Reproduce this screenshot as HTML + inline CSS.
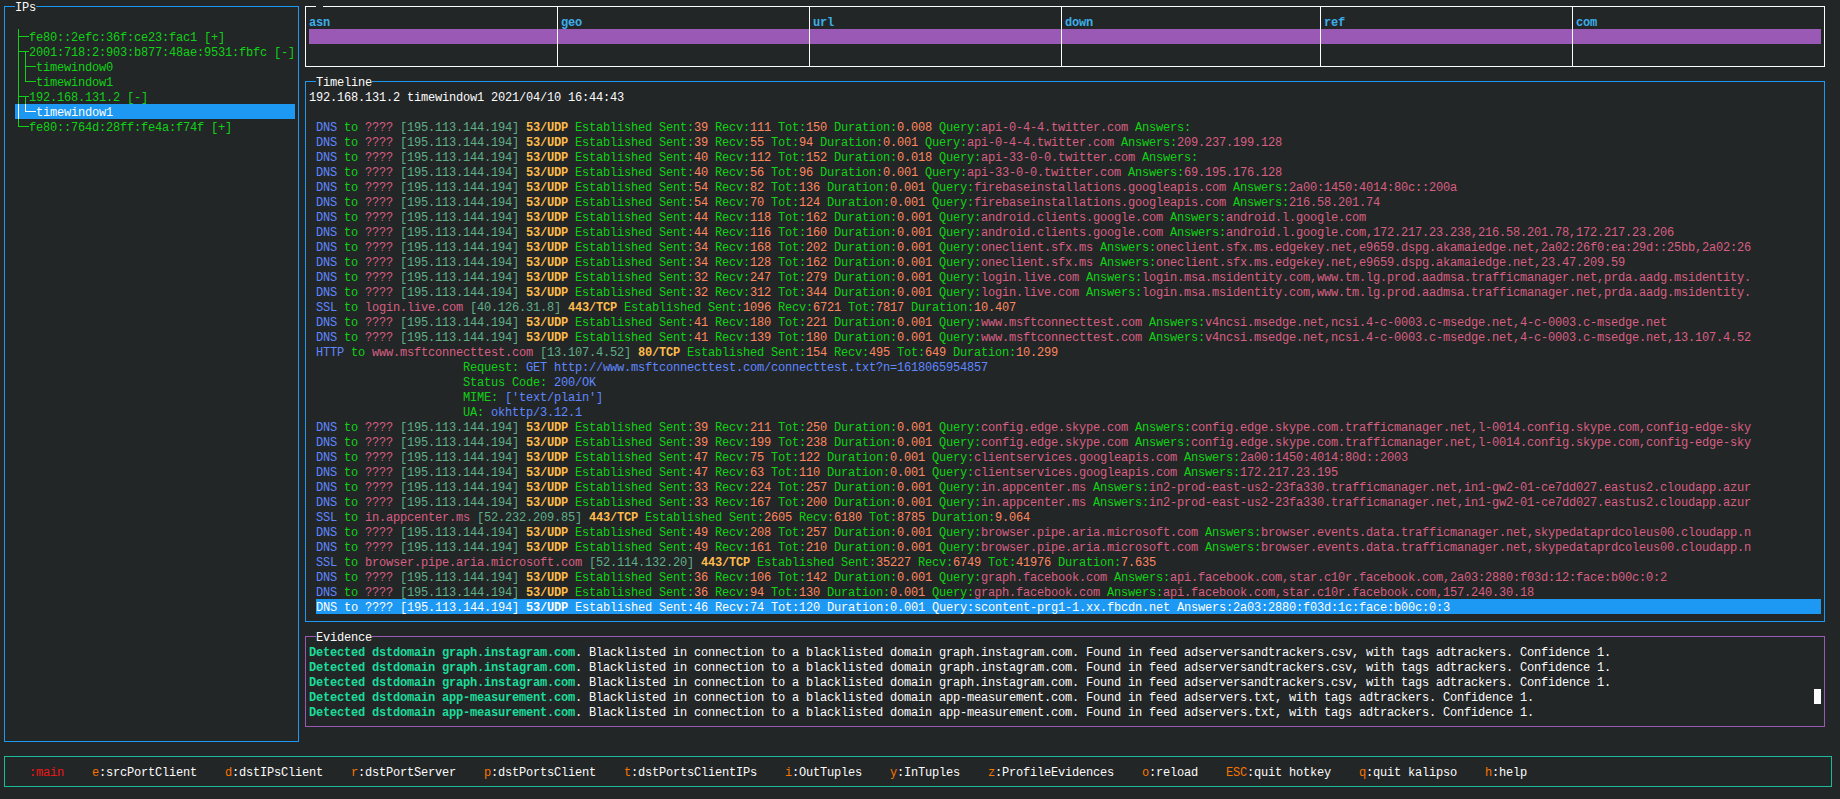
<!DOCTYPE html>
<html><head><meta charset="utf-8"><title>kalipso</title>
<style>
html,body{margin:0;padding:0;background:#232627;}
body{width:1840px;height:799px;overflow:hidden;position:relative;font-family:"Liberation Mono",monospace;font-size:12.0000px;letter-spacing:-0.2012px;color:#fcfcfc;}
i,b,s{position:absolute;display:block;font-style:normal;text-decoration:none;}
s{white-space:pre;height:15px;line-height:15px;font-weight:normal;}
s.B{font-weight:bold;}
.c0{color:#fcfcfc;}
.c1{color:#11d116;}
.c2{color:#3daee9;}
.c3{color:#5f87ff;}
.c4{color:#d75f82;}
.c5{color:#5faf87;}
.c6{color:#fdbc4b;}
.c7{color:#ff875f;}
.c8{color:#1cdc9a;}
.c9{color:#ed1515;}
.c10{color:#f67400;}
</style></head><body>
<b style="left:15px;top:104px;width:280px;height:15px;background:#1d99f3"></b>
<b style="left:309px;top:29px;width:1512px;height:15px;background:#9b59b6"></b>
<b style="left:316px;top:599px;width:1505px;height:15px;background:#1d99f3"></b>
<b style="left:1814px;top:689px;width:7px;height:15px;background:#fcfcfc"></b>
<i style="left:4px;top:6px;width:11px;height:1px;background:#1d99f3"></i>
<i style="left:36px;top:6px;width:263px;height:1px;background:#1d99f3"></i>
<i style="left:4px;top:741px;width:295px;height:1px;background:#1d99f3"></i>
<i style="left:4px;top:6px;width:1px;height:736px;background:#1d99f3"></i>
<i style="left:298px;top:6px;width:1px;height:736px;background:#1d99f3"></i>
<i style="left:18px;top:29px;width:1px;height:75px;background:#11d116"></i>
<i style="left:18px;top:104px;width:1px;height:15px;background:#fcfcfc"></i>
<i style="left:18px;top:119px;width:1px;height:8px;background:#11d116"></i>
<i style="left:18px;top:36px;width:11px;height:1px;background:#11d116"></i>
<i style="left:18px;top:51px;width:11px;height:1px;background:#11d116"></i>
<i style="left:25px;top:51px;width:1px;height:31px;background:#11d116"></i>
<i style="left:25px;top:66px;width:11px;height:1px;background:#11d116"></i>
<i style="left:25px;top:81px;width:11px;height:1px;background:#11d116"></i>
<i style="left:18px;top:96px;width:11px;height:1px;background:#11d116"></i>
<i style="left:25px;top:96px;width:1px;height:8px;background:#11d116"></i>
<i style="left:25px;top:104px;width:1px;height:8px;background:#fcfcfc"></i>
<i style="left:25px;top:111px;width:11px;height:1px;background:#fcfcfc"></i>
<i style="left:18px;top:126px;width:11px;height:1px;background:#11d116"></i>
<i style="left:305px;top:6px;width:11px;height:1px;background:#fcfcfc"></i>
<i style="left:323px;top:6px;width:1502px;height:1px;background:#fcfcfc"></i>
<i style="left:305px;top:66px;width:1520px;height:1px;background:#fcfcfc"></i>
<i style="left:305px;top:6px;width:1px;height:61px;background:#fcfcfc"></i>
<i style="left:1824px;top:6px;width:1px;height:61px;background:#fcfcfc"></i>
<i style="left:557px;top:6px;width:1px;height:60px;background:#fcfcfc"></i>
<i style="left:809px;top:6px;width:1px;height:60px;background:#fcfcfc"></i>
<i style="left:1061px;top:6px;width:1px;height:60px;background:#fcfcfc"></i>
<i style="left:1320px;top:6px;width:1px;height:60px;background:#fcfcfc"></i>
<i style="left:1572px;top:6px;width:1px;height:60px;background:#fcfcfc"></i>
<i style="left:305px;top:81px;width:11px;height:1px;background:#1d99f3"></i>
<i style="left:372px;top:81px;width:1453px;height:1px;background:#1d99f3"></i>
<i style="left:305px;top:621px;width:1520px;height:1px;background:#1d99f3"></i>
<i style="left:305px;top:81px;width:1px;height:541px;background:#1d99f3"></i>
<i style="left:1824px;top:81px;width:1px;height:541px;background:#1d99f3"></i>
<i style="left:305px;top:636px;width:11px;height:1px;background:#9b59b6"></i>
<i style="left:372px;top:636px;width:1453px;height:1px;background:#9b59b6"></i>
<i style="left:305px;top:726px;width:1520px;height:1px;background:#9b59b6"></i>
<i style="left:305px;top:636px;width:1px;height:91px;background:#9b59b6"></i>
<i style="left:1824px;top:636px;width:1px;height:91px;background:#9b59b6"></i>
<i style="left:4px;top:756px;width:1828px;height:1px;background:#1abc9c"></i>
<i style="left:4px;top:786px;width:1828px;height:1px;background:#1abc9c"></i>
<i style="left:4px;top:756px;width:1px;height:31px;background:#1abc9c"></i>
<i style="left:1831px;top:756px;width:1px;height:31px;background:#1abc9c"></i>
<s class="c0" style="left:15px;top:1.0px">IPs</s>
<s class="c1" style="left:29px;top:31.0px">fe80::2efc:36f:ce23:fac1 [+]</s>
<s class="c1" style="left:29px;top:46.0px">2001:718:2:903:b877:48ae:9531:fbfc [-]</s>
<s class="c1" style="left:36px;top:61.0px">timewindow0</s>
<s class="c1" style="left:36px;top:76.0px">timewindow1</s>
<s class="c1" style="left:29px;top:91.0px">192.168.131.2 [-]</s>
<s class="c0" style="left:36px;top:106.0px">timewindow1</s>
<s class="c1" style="left:29px;top:121.0px">fe80::764d:28ff:fe4a:f74f [+]</s>
<s class="c2 B" style="left:309px;top:16.0px">asn</s>
<s class="c2 B" style="left:561px;top:16.0px">geo</s>
<s class="c2 B" style="left:813px;top:16.0px">url</s>
<s class="c2 B" style="left:1065px;top:16.0px">down</s>
<s class="c2 B" style="left:1324px;top:16.0px">ref</s>
<s class="c2 B" style="left:1576px;top:16.0px">com</s>
<s class="c0" style="left:316px;top:76.0px">Timeline</s>
<s class="c0" style="left:309px;top:91.0px">192.168.131.2 timewindow1 2021/04/10 16:44:43</s>
<s class="c3" style="left:316px;top:121.0px">DNS</s>
<s class="c1" style="left:344px;top:121.0px">to</s>
<s class="c4" style="left:365px;top:121.0px">????</s>
<s class="c5" style="left:400px;top:121.0px">[195.113.144.194]</s>
<s class="c6 B" style="left:526px;top:121.0px">53/UDP</s>
<s class="c1" style="left:575px;top:121.0px">Established</s>
<s class="c1" style="left:659px;top:121.0px">Sent:</s>
<s class="c7" style="left:694px;top:121.0px">39</s>
<s class="c1" style="left:715px;top:121.0px">Recv:</s>
<s class="c7" style="left:750px;top:121.0px">111</s>
<s class="c1" style="left:778px;top:121.0px">Tot:</s>
<s class="c7" style="left:806px;top:121.0px">150</s>
<s class="c1" style="left:834px;top:121.0px">Duration:</s>
<s class="c7" style="left:897px;top:121.0px">0.008</s>
<s class="c1" style="left:939px;top:121.0px">Query:</s>
<s class="c4" style="left:981px;top:121.0px">api-0-4-4.twitter.com</s>
<s class="c1" style="left:1135px;top:121.0px">Answers:</s>
<s class="c3" style="left:316px;top:136.0px">DNS</s>
<s class="c1" style="left:344px;top:136.0px">to</s>
<s class="c4" style="left:365px;top:136.0px">????</s>
<s class="c5" style="left:400px;top:136.0px">[195.113.144.194]</s>
<s class="c6 B" style="left:526px;top:136.0px">53/UDP</s>
<s class="c1" style="left:575px;top:136.0px">Established</s>
<s class="c1" style="left:659px;top:136.0px">Sent:</s>
<s class="c7" style="left:694px;top:136.0px">39</s>
<s class="c1" style="left:715px;top:136.0px">Recv:</s>
<s class="c7" style="left:750px;top:136.0px">55</s>
<s class="c1" style="left:771px;top:136.0px">Tot:</s>
<s class="c7" style="left:799px;top:136.0px">94</s>
<s class="c1" style="left:820px;top:136.0px">Duration:</s>
<s class="c7" style="left:883px;top:136.0px">0.001</s>
<s class="c1" style="left:925px;top:136.0px">Query:</s>
<s class="c4" style="left:967px;top:136.0px">api-0-4-4.twitter.com</s>
<s class="c1" style="left:1121px;top:136.0px">Answers:</s>
<s class="c4" style="left:1177px;top:136.0px">209.237.199.128</s>
<s class="c3" style="left:316px;top:151.0px">DNS</s>
<s class="c1" style="left:344px;top:151.0px">to</s>
<s class="c4" style="left:365px;top:151.0px">????</s>
<s class="c5" style="left:400px;top:151.0px">[195.113.144.194]</s>
<s class="c6 B" style="left:526px;top:151.0px">53/UDP</s>
<s class="c1" style="left:575px;top:151.0px">Established</s>
<s class="c1" style="left:659px;top:151.0px">Sent:</s>
<s class="c7" style="left:694px;top:151.0px">40</s>
<s class="c1" style="left:715px;top:151.0px">Recv:</s>
<s class="c7" style="left:750px;top:151.0px">112</s>
<s class="c1" style="left:778px;top:151.0px">Tot:</s>
<s class="c7" style="left:806px;top:151.0px">152</s>
<s class="c1" style="left:834px;top:151.0px">Duration:</s>
<s class="c7" style="left:897px;top:151.0px">0.018</s>
<s class="c1" style="left:939px;top:151.0px">Query:</s>
<s class="c4" style="left:981px;top:151.0px">api-33-0-0.twitter.com</s>
<s class="c1" style="left:1142px;top:151.0px">Answers:</s>
<s class="c3" style="left:316px;top:166.0px">DNS</s>
<s class="c1" style="left:344px;top:166.0px">to</s>
<s class="c4" style="left:365px;top:166.0px">????</s>
<s class="c5" style="left:400px;top:166.0px">[195.113.144.194]</s>
<s class="c6 B" style="left:526px;top:166.0px">53/UDP</s>
<s class="c1" style="left:575px;top:166.0px">Established</s>
<s class="c1" style="left:659px;top:166.0px">Sent:</s>
<s class="c7" style="left:694px;top:166.0px">40</s>
<s class="c1" style="left:715px;top:166.0px">Recv:</s>
<s class="c7" style="left:750px;top:166.0px">56</s>
<s class="c1" style="left:771px;top:166.0px">Tot:</s>
<s class="c7" style="left:799px;top:166.0px">96</s>
<s class="c1" style="left:820px;top:166.0px">Duration:</s>
<s class="c7" style="left:883px;top:166.0px">0.001</s>
<s class="c1" style="left:925px;top:166.0px">Query:</s>
<s class="c4" style="left:967px;top:166.0px">api-33-0-0.twitter.com</s>
<s class="c1" style="left:1128px;top:166.0px">Answers:</s>
<s class="c4" style="left:1184px;top:166.0px">69.195.176.128</s>
<s class="c3" style="left:316px;top:181.0px">DNS</s>
<s class="c1" style="left:344px;top:181.0px">to</s>
<s class="c4" style="left:365px;top:181.0px">????</s>
<s class="c5" style="left:400px;top:181.0px">[195.113.144.194]</s>
<s class="c6 B" style="left:526px;top:181.0px">53/UDP</s>
<s class="c1" style="left:575px;top:181.0px">Established</s>
<s class="c1" style="left:659px;top:181.0px">Sent:</s>
<s class="c7" style="left:694px;top:181.0px">54</s>
<s class="c1" style="left:715px;top:181.0px">Recv:</s>
<s class="c7" style="left:750px;top:181.0px">82</s>
<s class="c1" style="left:771px;top:181.0px">Tot:</s>
<s class="c7" style="left:799px;top:181.0px">136</s>
<s class="c1" style="left:827px;top:181.0px">Duration:</s>
<s class="c7" style="left:890px;top:181.0px">0.001</s>
<s class="c1" style="left:932px;top:181.0px">Query:</s>
<s class="c4" style="left:974px;top:181.0px">firebaseinstallations.googleapis.com</s>
<s class="c1" style="left:1233px;top:181.0px">Answers:</s>
<s class="c4" style="left:1289px;top:181.0px">2a00:1450:4014:80c::200a</s>
<s class="c3" style="left:316px;top:196.0px">DNS</s>
<s class="c1" style="left:344px;top:196.0px">to</s>
<s class="c4" style="left:365px;top:196.0px">????</s>
<s class="c5" style="left:400px;top:196.0px">[195.113.144.194]</s>
<s class="c6 B" style="left:526px;top:196.0px">53/UDP</s>
<s class="c1" style="left:575px;top:196.0px">Established</s>
<s class="c1" style="left:659px;top:196.0px">Sent:</s>
<s class="c7" style="left:694px;top:196.0px">54</s>
<s class="c1" style="left:715px;top:196.0px">Recv:</s>
<s class="c7" style="left:750px;top:196.0px">70</s>
<s class="c1" style="left:771px;top:196.0px">Tot:</s>
<s class="c7" style="left:799px;top:196.0px">124</s>
<s class="c1" style="left:827px;top:196.0px">Duration:</s>
<s class="c7" style="left:890px;top:196.0px">0.001</s>
<s class="c1" style="left:932px;top:196.0px">Query:</s>
<s class="c4" style="left:974px;top:196.0px">firebaseinstallations.googleapis.com</s>
<s class="c1" style="left:1233px;top:196.0px">Answers:</s>
<s class="c4" style="left:1289px;top:196.0px">216.58.201.74</s>
<s class="c3" style="left:316px;top:211.0px">DNS</s>
<s class="c1" style="left:344px;top:211.0px">to</s>
<s class="c4" style="left:365px;top:211.0px">????</s>
<s class="c5" style="left:400px;top:211.0px">[195.113.144.194]</s>
<s class="c6 B" style="left:526px;top:211.0px">53/UDP</s>
<s class="c1" style="left:575px;top:211.0px">Established</s>
<s class="c1" style="left:659px;top:211.0px">Sent:</s>
<s class="c7" style="left:694px;top:211.0px">44</s>
<s class="c1" style="left:715px;top:211.0px">Recv:</s>
<s class="c7" style="left:750px;top:211.0px">118</s>
<s class="c1" style="left:778px;top:211.0px">Tot:</s>
<s class="c7" style="left:806px;top:211.0px">162</s>
<s class="c1" style="left:834px;top:211.0px">Duration:</s>
<s class="c7" style="left:897px;top:211.0px">0.001</s>
<s class="c1" style="left:939px;top:211.0px">Query:</s>
<s class="c4" style="left:981px;top:211.0px">android.clients.google.com</s>
<s class="c1" style="left:1170px;top:211.0px">Answers:</s>
<s class="c4" style="left:1226px;top:211.0px">android.l.google.com</s>
<s class="c3" style="left:316px;top:226.0px">DNS</s>
<s class="c1" style="left:344px;top:226.0px">to</s>
<s class="c4" style="left:365px;top:226.0px">????</s>
<s class="c5" style="left:400px;top:226.0px">[195.113.144.194]</s>
<s class="c6 B" style="left:526px;top:226.0px">53/UDP</s>
<s class="c1" style="left:575px;top:226.0px">Established</s>
<s class="c1" style="left:659px;top:226.0px">Sent:</s>
<s class="c7" style="left:694px;top:226.0px">44</s>
<s class="c1" style="left:715px;top:226.0px">Recv:</s>
<s class="c7" style="left:750px;top:226.0px">116</s>
<s class="c1" style="left:778px;top:226.0px">Tot:</s>
<s class="c7" style="left:806px;top:226.0px">160</s>
<s class="c1" style="left:834px;top:226.0px">Duration:</s>
<s class="c7" style="left:897px;top:226.0px">0.001</s>
<s class="c1" style="left:939px;top:226.0px">Query:</s>
<s class="c4" style="left:981px;top:226.0px">android.clients.google.com</s>
<s class="c1" style="left:1170px;top:226.0px">Answers:</s>
<s class="c4" style="left:1226px;top:226.0px">android.l.google.com,172.217.23.238,216.58.201.78,172.217.23.206</s>
<s class="c3" style="left:316px;top:241.0px">DNS</s>
<s class="c1" style="left:344px;top:241.0px">to</s>
<s class="c4" style="left:365px;top:241.0px">????</s>
<s class="c5" style="left:400px;top:241.0px">[195.113.144.194]</s>
<s class="c6 B" style="left:526px;top:241.0px">53/UDP</s>
<s class="c1" style="left:575px;top:241.0px">Established</s>
<s class="c1" style="left:659px;top:241.0px">Sent:</s>
<s class="c7" style="left:694px;top:241.0px">34</s>
<s class="c1" style="left:715px;top:241.0px">Recv:</s>
<s class="c7" style="left:750px;top:241.0px">168</s>
<s class="c1" style="left:778px;top:241.0px">Tot:</s>
<s class="c7" style="left:806px;top:241.0px">202</s>
<s class="c1" style="left:834px;top:241.0px">Duration:</s>
<s class="c7" style="left:897px;top:241.0px">0.001</s>
<s class="c1" style="left:939px;top:241.0px">Query:</s>
<s class="c4" style="left:981px;top:241.0px">oneclient.sfx.ms</s>
<s class="c1" style="left:1100px;top:241.0px">Answers:</s>
<s class="c4" style="left:1156px;top:241.0px">oneclient.sfx.ms.edgekey.net,e9659.dspg.akamaiedge.net,2a02:26f0:ea:29d::25bb,2a02:26</s>
<s class="c3" style="left:316px;top:256.0px">DNS</s>
<s class="c1" style="left:344px;top:256.0px">to</s>
<s class="c4" style="left:365px;top:256.0px">????</s>
<s class="c5" style="left:400px;top:256.0px">[195.113.144.194]</s>
<s class="c6 B" style="left:526px;top:256.0px">53/UDP</s>
<s class="c1" style="left:575px;top:256.0px">Established</s>
<s class="c1" style="left:659px;top:256.0px">Sent:</s>
<s class="c7" style="left:694px;top:256.0px">34</s>
<s class="c1" style="left:715px;top:256.0px">Recv:</s>
<s class="c7" style="left:750px;top:256.0px">128</s>
<s class="c1" style="left:778px;top:256.0px">Tot:</s>
<s class="c7" style="left:806px;top:256.0px">162</s>
<s class="c1" style="left:834px;top:256.0px">Duration:</s>
<s class="c7" style="left:897px;top:256.0px">0.001</s>
<s class="c1" style="left:939px;top:256.0px">Query:</s>
<s class="c4" style="left:981px;top:256.0px">oneclient.sfx.ms</s>
<s class="c1" style="left:1100px;top:256.0px">Answers:</s>
<s class="c4" style="left:1156px;top:256.0px">oneclient.sfx.ms.edgekey.net,e9659.dspg.akamaiedge.net,23.47.209.59</s>
<s class="c3" style="left:316px;top:271.0px">DNS</s>
<s class="c1" style="left:344px;top:271.0px">to</s>
<s class="c4" style="left:365px;top:271.0px">????</s>
<s class="c5" style="left:400px;top:271.0px">[195.113.144.194]</s>
<s class="c6 B" style="left:526px;top:271.0px">53/UDP</s>
<s class="c1" style="left:575px;top:271.0px">Established</s>
<s class="c1" style="left:659px;top:271.0px">Sent:</s>
<s class="c7" style="left:694px;top:271.0px">32</s>
<s class="c1" style="left:715px;top:271.0px">Recv:</s>
<s class="c7" style="left:750px;top:271.0px">247</s>
<s class="c1" style="left:778px;top:271.0px">Tot:</s>
<s class="c7" style="left:806px;top:271.0px">279</s>
<s class="c1" style="left:834px;top:271.0px">Duration:</s>
<s class="c7" style="left:897px;top:271.0px">0.001</s>
<s class="c1" style="left:939px;top:271.0px">Query:</s>
<s class="c4" style="left:981px;top:271.0px">login.live.com</s>
<s class="c1" style="left:1086px;top:271.0px">Answers:</s>
<s class="c4" style="left:1142px;top:271.0px">login.msa.msidentity.com,www.tm.lg.prod.aadmsa.trafficmanager.net,prda.aadg.msidentity.</s>
<s class="c3" style="left:316px;top:286.0px">DNS</s>
<s class="c1" style="left:344px;top:286.0px">to</s>
<s class="c4" style="left:365px;top:286.0px">????</s>
<s class="c5" style="left:400px;top:286.0px">[195.113.144.194]</s>
<s class="c6 B" style="left:526px;top:286.0px">53/UDP</s>
<s class="c1" style="left:575px;top:286.0px">Established</s>
<s class="c1" style="left:659px;top:286.0px">Sent:</s>
<s class="c7" style="left:694px;top:286.0px">32</s>
<s class="c1" style="left:715px;top:286.0px">Recv:</s>
<s class="c7" style="left:750px;top:286.0px">312</s>
<s class="c1" style="left:778px;top:286.0px">Tot:</s>
<s class="c7" style="left:806px;top:286.0px">344</s>
<s class="c1" style="left:834px;top:286.0px">Duration:</s>
<s class="c7" style="left:897px;top:286.0px">0.001</s>
<s class="c1" style="left:939px;top:286.0px">Query:</s>
<s class="c4" style="left:981px;top:286.0px">login.live.com</s>
<s class="c1" style="left:1086px;top:286.0px">Answers:</s>
<s class="c4" style="left:1142px;top:286.0px">login.msa.msidentity.com,www.tm.lg.prod.aadmsa.trafficmanager.net,prda.aadg.msidentity.</s>
<s class="c3" style="left:316px;top:301.0px">SSL</s>
<s class="c1" style="left:344px;top:301.0px">to</s>
<s class="c4" style="left:365px;top:301.0px">login.live.com</s>
<s class="c5" style="left:470px;top:301.0px">[40.126.31.8]</s>
<s class="c6 B" style="left:568px;top:301.0px">443/TCP</s>
<s class="c1" style="left:624px;top:301.0px">Established</s>
<s class="c1" style="left:708px;top:301.0px">Sent:</s>
<s class="c7" style="left:743px;top:301.0px">1096</s>
<s class="c1" style="left:778px;top:301.0px">Recv:</s>
<s class="c7" style="left:813px;top:301.0px">6721</s>
<s class="c1" style="left:848px;top:301.0px">Tot:</s>
<s class="c7" style="left:876px;top:301.0px">7817</s>
<s class="c1" style="left:911px;top:301.0px">Duration:</s>
<s class="c7" style="left:974px;top:301.0px">10.407</s>
<s class="c3" style="left:316px;top:316.0px">DNS</s>
<s class="c1" style="left:344px;top:316.0px">to</s>
<s class="c4" style="left:365px;top:316.0px">????</s>
<s class="c5" style="left:400px;top:316.0px">[195.113.144.194]</s>
<s class="c6 B" style="left:526px;top:316.0px">53/UDP</s>
<s class="c1" style="left:575px;top:316.0px">Established</s>
<s class="c1" style="left:659px;top:316.0px">Sent:</s>
<s class="c7" style="left:694px;top:316.0px">41</s>
<s class="c1" style="left:715px;top:316.0px">Recv:</s>
<s class="c7" style="left:750px;top:316.0px">180</s>
<s class="c1" style="left:778px;top:316.0px">Tot:</s>
<s class="c7" style="left:806px;top:316.0px">221</s>
<s class="c1" style="left:834px;top:316.0px">Duration:</s>
<s class="c7" style="left:897px;top:316.0px">0.001</s>
<s class="c1" style="left:939px;top:316.0px">Query:</s>
<s class="c4" style="left:981px;top:316.0px">www.msftconnecttest.com</s>
<s class="c1" style="left:1149px;top:316.0px">Answers:</s>
<s class="c4" style="left:1205px;top:316.0px">v4ncsi.msedge.net,ncsi.4-c-0003.c-msedge.net,4-c-0003.c-msedge.net</s>
<s class="c3" style="left:316px;top:331.0px">DNS</s>
<s class="c1" style="left:344px;top:331.0px">to</s>
<s class="c4" style="left:365px;top:331.0px">????</s>
<s class="c5" style="left:400px;top:331.0px">[195.113.144.194]</s>
<s class="c6 B" style="left:526px;top:331.0px">53/UDP</s>
<s class="c1" style="left:575px;top:331.0px">Established</s>
<s class="c1" style="left:659px;top:331.0px">Sent:</s>
<s class="c7" style="left:694px;top:331.0px">41</s>
<s class="c1" style="left:715px;top:331.0px">Recv:</s>
<s class="c7" style="left:750px;top:331.0px">139</s>
<s class="c1" style="left:778px;top:331.0px">Tot:</s>
<s class="c7" style="left:806px;top:331.0px">180</s>
<s class="c1" style="left:834px;top:331.0px">Duration:</s>
<s class="c7" style="left:897px;top:331.0px">0.001</s>
<s class="c1" style="left:939px;top:331.0px">Query:</s>
<s class="c4" style="left:981px;top:331.0px">www.msftconnecttest.com</s>
<s class="c1" style="left:1149px;top:331.0px">Answers:</s>
<s class="c4" style="left:1205px;top:331.0px">v4ncsi.msedge.net,ncsi.4-c-0003.c-msedge.net,4-c-0003.c-msedge.net,13.107.4.52</s>
<s class="c3" style="left:316px;top:346.0px">HTTP</s>
<s class="c1" style="left:351px;top:346.0px">to</s>
<s class="c4" style="left:372px;top:346.0px">www.msftconnecttest.com</s>
<s class="c5" style="left:540px;top:346.0px">[13.107.4.52]</s>
<s class="c6 B" style="left:638px;top:346.0px">80/TCP</s>
<s class="c1" style="left:687px;top:346.0px">Established</s>
<s class="c1" style="left:771px;top:346.0px">Sent:</s>
<s class="c7" style="left:806px;top:346.0px">154</s>
<s class="c1" style="left:834px;top:346.0px">Recv:</s>
<s class="c7" style="left:869px;top:346.0px">495</s>
<s class="c1" style="left:897px;top:346.0px">Tot:</s>
<s class="c7" style="left:925px;top:346.0px">649</s>
<s class="c1" style="left:953px;top:346.0px">Duration:</s>
<s class="c7" style="left:1016px;top:346.0px">10.299</s>
<s class="c1" style="left:463px;top:361.0px">Request: </s>
<s class="c3" style="left:526px;top:361.0px">GET http:</s>
<s class="c3" style="left:589px;top:361.0px">//www.msftconnecttest.com/connecttest.txt?n=1618065954857</s>
<s class="c1" style="left:463px;top:376.0px">Status Code: </s>
<s class="c3" style="left:554px;top:376.0px">200/OK</s>
<s class="c1" style="left:463px;top:391.0px">MIME: </s>
<s class="c3" style="left:505px;top:391.0px">[&#x27;text/plain&#x27;]</s>
<s class="c1" style="left:463px;top:406.0px">UA: </s>
<s class="c3" style="left:491px;top:406.0px">okhttp/3.12.1</s>
<s class="c3" style="left:316px;top:421.0px">DNS</s>
<s class="c1" style="left:344px;top:421.0px">to</s>
<s class="c4" style="left:365px;top:421.0px">????</s>
<s class="c5" style="left:400px;top:421.0px">[195.113.144.194]</s>
<s class="c6 B" style="left:526px;top:421.0px">53/UDP</s>
<s class="c1" style="left:575px;top:421.0px">Established</s>
<s class="c1" style="left:659px;top:421.0px">Sent:</s>
<s class="c7" style="left:694px;top:421.0px">39</s>
<s class="c1" style="left:715px;top:421.0px">Recv:</s>
<s class="c7" style="left:750px;top:421.0px">211</s>
<s class="c1" style="left:778px;top:421.0px">Tot:</s>
<s class="c7" style="left:806px;top:421.0px">250</s>
<s class="c1" style="left:834px;top:421.0px">Duration:</s>
<s class="c7" style="left:897px;top:421.0px">0.001</s>
<s class="c1" style="left:939px;top:421.0px">Query:</s>
<s class="c4" style="left:981px;top:421.0px">config.edge.skype.com</s>
<s class="c1" style="left:1135px;top:421.0px">Answers:</s>
<s class="c4" style="left:1191px;top:421.0px">config.edge.skype.com.trafficmanager.net,l-0014.config.skype.com,config-edge-sky</s>
<s class="c3" style="left:316px;top:436.0px">DNS</s>
<s class="c1" style="left:344px;top:436.0px">to</s>
<s class="c4" style="left:365px;top:436.0px">????</s>
<s class="c5" style="left:400px;top:436.0px">[195.113.144.194]</s>
<s class="c6 B" style="left:526px;top:436.0px">53/UDP</s>
<s class="c1" style="left:575px;top:436.0px">Established</s>
<s class="c1" style="left:659px;top:436.0px">Sent:</s>
<s class="c7" style="left:694px;top:436.0px">39</s>
<s class="c1" style="left:715px;top:436.0px">Recv:</s>
<s class="c7" style="left:750px;top:436.0px">199</s>
<s class="c1" style="left:778px;top:436.0px">Tot:</s>
<s class="c7" style="left:806px;top:436.0px">238</s>
<s class="c1" style="left:834px;top:436.0px">Duration:</s>
<s class="c7" style="left:897px;top:436.0px">0.001</s>
<s class="c1" style="left:939px;top:436.0px">Query:</s>
<s class="c4" style="left:981px;top:436.0px">config.edge.skype.com</s>
<s class="c1" style="left:1135px;top:436.0px">Answers:</s>
<s class="c4" style="left:1191px;top:436.0px">config.edge.skype.com.trafficmanager.net,l-0014.config.skype.com,config-edge-sky</s>
<s class="c3" style="left:316px;top:451.0px">DNS</s>
<s class="c1" style="left:344px;top:451.0px">to</s>
<s class="c4" style="left:365px;top:451.0px">????</s>
<s class="c5" style="left:400px;top:451.0px">[195.113.144.194]</s>
<s class="c6 B" style="left:526px;top:451.0px">53/UDP</s>
<s class="c1" style="left:575px;top:451.0px">Established</s>
<s class="c1" style="left:659px;top:451.0px">Sent:</s>
<s class="c7" style="left:694px;top:451.0px">47</s>
<s class="c1" style="left:715px;top:451.0px">Recv:</s>
<s class="c7" style="left:750px;top:451.0px">75</s>
<s class="c1" style="left:771px;top:451.0px">Tot:</s>
<s class="c7" style="left:799px;top:451.0px">122</s>
<s class="c1" style="left:827px;top:451.0px">Duration:</s>
<s class="c7" style="left:890px;top:451.0px">0.001</s>
<s class="c1" style="left:932px;top:451.0px">Query:</s>
<s class="c4" style="left:974px;top:451.0px">clientservices.googleapis.com</s>
<s class="c1" style="left:1184px;top:451.0px">Answers:</s>
<s class="c4" style="left:1240px;top:451.0px">2a00:1450:4014:80d::2003</s>
<s class="c3" style="left:316px;top:466.0px">DNS</s>
<s class="c1" style="left:344px;top:466.0px">to</s>
<s class="c4" style="left:365px;top:466.0px">????</s>
<s class="c5" style="left:400px;top:466.0px">[195.113.144.194]</s>
<s class="c6 B" style="left:526px;top:466.0px">53/UDP</s>
<s class="c1" style="left:575px;top:466.0px">Established</s>
<s class="c1" style="left:659px;top:466.0px">Sent:</s>
<s class="c7" style="left:694px;top:466.0px">47</s>
<s class="c1" style="left:715px;top:466.0px">Recv:</s>
<s class="c7" style="left:750px;top:466.0px">63</s>
<s class="c1" style="left:771px;top:466.0px">Tot:</s>
<s class="c7" style="left:799px;top:466.0px">110</s>
<s class="c1" style="left:827px;top:466.0px">Duration:</s>
<s class="c7" style="left:890px;top:466.0px">0.001</s>
<s class="c1" style="left:932px;top:466.0px">Query:</s>
<s class="c4" style="left:974px;top:466.0px">clientservices.googleapis.com</s>
<s class="c1" style="left:1184px;top:466.0px">Answers:</s>
<s class="c4" style="left:1240px;top:466.0px">172.217.23.195</s>
<s class="c3" style="left:316px;top:481.0px">DNS</s>
<s class="c1" style="left:344px;top:481.0px">to</s>
<s class="c4" style="left:365px;top:481.0px">????</s>
<s class="c5" style="left:400px;top:481.0px">[195.113.144.194]</s>
<s class="c6 B" style="left:526px;top:481.0px">53/UDP</s>
<s class="c1" style="left:575px;top:481.0px">Established</s>
<s class="c1" style="left:659px;top:481.0px">Sent:</s>
<s class="c7" style="left:694px;top:481.0px">33</s>
<s class="c1" style="left:715px;top:481.0px">Recv:</s>
<s class="c7" style="left:750px;top:481.0px">224</s>
<s class="c1" style="left:778px;top:481.0px">Tot:</s>
<s class="c7" style="left:806px;top:481.0px">257</s>
<s class="c1" style="left:834px;top:481.0px">Duration:</s>
<s class="c7" style="left:897px;top:481.0px">0.001</s>
<s class="c1" style="left:939px;top:481.0px">Query:</s>
<s class="c4" style="left:981px;top:481.0px">in.appcenter.ms</s>
<s class="c1" style="left:1093px;top:481.0px">Answers:</s>
<s class="c4" style="left:1149px;top:481.0px">in2-prod-east-us2-23fa330.trafficmanager.net,in1-gw2-01-ce7dd027.eastus2.cloudapp.azur</s>
<s class="c3" style="left:316px;top:496.0px">DNS</s>
<s class="c1" style="left:344px;top:496.0px">to</s>
<s class="c4" style="left:365px;top:496.0px">????</s>
<s class="c5" style="left:400px;top:496.0px">[195.113.144.194]</s>
<s class="c6 B" style="left:526px;top:496.0px">53/UDP</s>
<s class="c1" style="left:575px;top:496.0px">Established</s>
<s class="c1" style="left:659px;top:496.0px">Sent:</s>
<s class="c7" style="left:694px;top:496.0px">33</s>
<s class="c1" style="left:715px;top:496.0px">Recv:</s>
<s class="c7" style="left:750px;top:496.0px">167</s>
<s class="c1" style="left:778px;top:496.0px">Tot:</s>
<s class="c7" style="left:806px;top:496.0px">200</s>
<s class="c1" style="left:834px;top:496.0px">Duration:</s>
<s class="c7" style="left:897px;top:496.0px">0.001</s>
<s class="c1" style="left:939px;top:496.0px">Query:</s>
<s class="c4" style="left:981px;top:496.0px">in.appcenter.ms</s>
<s class="c1" style="left:1093px;top:496.0px">Answers:</s>
<s class="c4" style="left:1149px;top:496.0px">in2-prod-east-us2-23fa330.trafficmanager.net,in1-gw2-01-ce7dd027.eastus2.cloudapp.azur</s>
<s class="c3" style="left:316px;top:511.0px">SSL</s>
<s class="c1" style="left:344px;top:511.0px">to</s>
<s class="c4" style="left:365px;top:511.0px">in.appcenter.ms</s>
<s class="c5" style="left:477px;top:511.0px">[52.232.209.85]</s>
<s class="c6 B" style="left:589px;top:511.0px">443/TCP</s>
<s class="c1" style="left:645px;top:511.0px">Established</s>
<s class="c1" style="left:729px;top:511.0px">Sent:</s>
<s class="c7" style="left:764px;top:511.0px">2605</s>
<s class="c1" style="left:799px;top:511.0px">Recv:</s>
<s class="c7" style="left:834px;top:511.0px">6180</s>
<s class="c1" style="left:869px;top:511.0px">Tot:</s>
<s class="c7" style="left:897px;top:511.0px">8785</s>
<s class="c1" style="left:932px;top:511.0px">Duration:</s>
<s class="c7" style="left:995px;top:511.0px">9.064</s>
<s class="c3" style="left:316px;top:526.0px">DNS</s>
<s class="c1" style="left:344px;top:526.0px">to</s>
<s class="c4" style="left:365px;top:526.0px">????</s>
<s class="c5" style="left:400px;top:526.0px">[195.113.144.194]</s>
<s class="c6 B" style="left:526px;top:526.0px">53/UDP</s>
<s class="c1" style="left:575px;top:526.0px">Established</s>
<s class="c1" style="left:659px;top:526.0px">Sent:</s>
<s class="c7" style="left:694px;top:526.0px">49</s>
<s class="c1" style="left:715px;top:526.0px">Recv:</s>
<s class="c7" style="left:750px;top:526.0px">208</s>
<s class="c1" style="left:778px;top:526.0px">Tot:</s>
<s class="c7" style="left:806px;top:526.0px">257</s>
<s class="c1" style="left:834px;top:526.0px">Duration:</s>
<s class="c7" style="left:897px;top:526.0px">0.001</s>
<s class="c1" style="left:939px;top:526.0px">Query:</s>
<s class="c4" style="left:981px;top:526.0px">browser.pipe.aria.microsoft.com</s>
<s class="c1" style="left:1205px;top:526.0px">Answers:</s>
<s class="c4" style="left:1261px;top:526.0px">browser.events.data.trafficmanager.net,skypedataprdcoleus00.cloudapp.n</s>
<s class="c3" style="left:316px;top:541.0px">DNS</s>
<s class="c1" style="left:344px;top:541.0px">to</s>
<s class="c4" style="left:365px;top:541.0px">????</s>
<s class="c5" style="left:400px;top:541.0px">[195.113.144.194]</s>
<s class="c6 B" style="left:526px;top:541.0px">53/UDP</s>
<s class="c1" style="left:575px;top:541.0px">Established</s>
<s class="c1" style="left:659px;top:541.0px">Sent:</s>
<s class="c7" style="left:694px;top:541.0px">49</s>
<s class="c1" style="left:715px;top:541.0px">Recv:</s>
<s class="c7" style="left:750px;top:541.0px">161</s>
<s class="c1" style="left:778px;top:541.0px">Tot:</s>
<s class="c7" style="left:806px;top:541.0px">210</s>
<s class="c1" style="left:834px;top:541.0px">Duration:</s>
<s class="c7" style="left:897px;top:541.0px">0.001</s>
<s class="c1" style="left:939px;top:541.0px">Query:</s>
<s class="c4" style="left:981px;top:541.0px">browser.pipe.aria.microsoft.com</s>
<s class="c1" style="left:1205px;top:541.0px">Answers:</s>
<s class="c4" style="left:1261px;top:541.0px">browser.events.data.trafficmanager.net,skypedataprdcoleus00.cloudapp.n</s>
<s class="c3" style="left:316px;top:556.0px">SSL</s>
<s class="c1" style="left:344px;top:556.0px">to</s>
<s class="c4" style="left:365px;top:556.0px">browser.pipe.aria.microsoft.com</s>
<s class="c5" style="left:589px;top:556.0px">[52.114.132.20]</s>
<s class="c6 B" style="left:701px;top:556.0px">443/TCP</s>
<s class="c1" style="left:757px;top:556.0px">Established</s>
<s class="c1" style="left:841px;top:556.0px">Sent:</s>
<s class="c7" style="left:876px;top:556.0px">35227</s>
<s class="c1" style="left:918px;top:556.0px">Recv:</s>
<s class="c7" style="left:953px;top:556.0px">6749</s>
<s class="c1" style="left:988px;top:556.0px">Tot:</s>
<s class="c7" style="left:1016px;top:556.0px">41976</s>
<s class="c1" style="left:1058px;top:556.0px">Duration:</s>
<s class="c7" style="left:1121px;top:556.0px">7.635</s>
<s class="c3" style="left:316px;top:571.0px">DNS</s>
<s class="c1" style="left:344px;top:571.0px">to</s>
<s class="c4" style="left:365px;top:571.0px">????</s>
<s class="c5" style="left:400px;top:571.0px">[195.113.144.194]</s>
<s class="c6 B" style="left:526px;top:571.0px">53/UDP</s>
<s class="c1" style="left:575px;top:571.0px">Established</s>
<s class="c1" style="left:659px;top:571.0px">Sent:</s>
<s class="c7" style="left:694px;top:571.0px">36</s>
<s class="c1" style="left:715px;top:571.0px">Recv:</s>
<s class="c7" style="left:750px;top:571.0px">106</s>
<s class="c1" style="left:778px;top:571.0px">Tot:</s>
<s class="c7" style="left:806px;top:571.0px">142</s>
<s class="c1" style="left:834px;top:571.0px">Duration:</s>
<s class="c7" style="left:897px;top:571.0px">0.001</s>
<s class="c1" style="left:939px;top:571.0px">Query:</s>
<s class="c4" style="left:981px;top:571.0px">graph.facebook.com</s>
<s class="c1" style="left:1114px;top:571.0px">Answers:</s>
<s class="c4" style="left:1170px;top:571.0px">api.facebook.com,star.c10r.facebook.com,2a03:2880:f03d:12:face:b00c:0:2</s>
<s class="c3" style="left:316px;top:586.0px">DNS</s>
<s class="c1" style="left:344px;top:586.0px">to</s>
<s class="c4" style="left:365px;top:586.0px">????</s>
<s class="c5" style="left:400px;top:586.0px">[195.113.144.194]</s>
<s class="c6 B" style="left:526px;top:586.0px">53/UDP</s>
<s class="c1" style="left:575px;top:586.0px">Established</s>
<s class="c1" style="left:659px;top:586.0px">Sent:</s>
<s class="c7" style="left:694px;top:586.0px">36</s>
<s class="c1" style="left:715px;top:586.0px">Recv:</s>
<s class="c7" style="left:750px;top:586.0px">94</s>
<s class="c1" style="left:771px;top:586.0px">Tot:</s>
<s class="c7" style="left:799px;top:586.0px">130</s>
<s class="c1" style="left:827px;top:586.0px">Duration:</s>
<s class="c7" style="left:890px;top:586.0px">0.001</s>
<s class="c1" style="left:932px;top:586.0px">Query:</s>
<s class="c4" style="left:974px;top:586.0px">graph.facebook.com</s>
<s class="c1" style="left:1107px;top:586.0px">Answers:</s>
<s class="c4" style="left:1163px;top:586.0px">api.facebook.com,star.c10r.facebook.com,157.240.30.18</s>
<s class="c0" style="left:316px;top:601.0px">DNS</s>
<s class="c0" style="left:344px;top:601.0px">to</s>
<s class="c0" style="left:365px;top:601.0px">????</s>
<s class="c0" style="left:400px;top:601.0px">[195.113.144.194]</s>
<s class="c0 B" style="left:526px;top:601.0px">53/UDP</s>
<s class="c0" style="left:575px;top:601.0px">Established</s>
<s class="c0" style="left:659px;top:601.0px">Sent:</s>
<s class="c0" style="left:694px;top:601.0px">46</s>
<s class="c0" style="left:715px;top:601.0px">Recv:</s>
<s class="c0" style="left:750px;top:601.0px">74</s>
<s class="c0" style="left:771px;top:601.0px">Tot:</s>
<s class="c0" style="left:799px;top:601.0px">120</s>
<s class="c0" style="left:827px;top:601.0px">Duration:</s>
<s class="c0" style="left:890px;top:601.0px">0.001</s>
<s class="c0" style="left:932px;top:601.0px">Query:</s>
<s class="c0" style="left:974px;top:601.0px">scontent-prg1-1.xx.fbcdn.net</s>
<s class="c0" style="left:1177px;top:601.0px">Answers:</s>
<s class="c0" style="left:1233px;top:601.0px">2a03:2880:f03d:1c:face:b00c:0:3</s>
<s class="c0" style="left:316px;top:631.0px">Evidence</s>
<s class="c8 B" style="left:309px;top:646.0px">Detected dstdomain graph.instagram.com</s>
<s class="c0" style="left:575px;top:646.0px">. Blacklisted in connection to a blacklisted domain graph.instagram.com. Found in feed adserversandtrackers.csv, with tags adtrackers. Confidence 1.</s>
<s class="c8 B" style="left:309px;top:661.0px">Detected dstdomain graph.instagram.com</s>
<s class="c0" style="left:575px;top:661.0px">. Blacklisted in connection to a blacklisted domain graph.instagram.com. Found in feed adserversandtrackers.csv, with tags adtrackers. Confidence 1.</s>
<s class="c8 B" style="left:309px;top:676.0px">Detected dstdomain graph.instagram.com</s>
<s class="c0" style="left:575px;top:676.0px">. Blacklisted in connection to a blacklisted domain graph.instagram.com. Found in feed adserversandtrackers.csv, with tags adtrackers. Confidence 1.</s>
<s class="c8 B" style="left:309px;top:691.0px">Detected dstdomain app-measurement.com</s>
<s class="c0" style="left:575px;top:691.0px">. Blacklisted in connection to a blacklisted domain app-measurement.com. Found in feed adservers.txt, with tags adtrackers. Confidence 1.</s>
<s class="c8 B" style="left:309px;top:706.0px">Detected dstdomain app-measurement.com</s>
<s class="c0" style="left:575px;top:706.0px">. Blacklisted in connection to a blacklisted domain app-measurement.com. Found in feed adservers.txt, with tags adtrackers. Confidence 1.</s>
<s class="c9" style="left:29px;top:766.0px">:main</s>
<s class="c10" style="left:92px;top:766.0px">e</s>
<s class="c0" style="left:99px;top:766.0px">:srcPortClient</s>
<s class="c10" style="left:225px;top:766.0px">d</s>
<s class="c0" style="left:232px;top:766.0px">:dstIPsClient</s>
<s class="c10" style="left:351px;top:766.0px">r</s>
<s class="c0" style="left:358px;top:766.0px">:dstPortServer</s>
<s class="c10" style="left:484px;top:766.0px">p</s>
<s class="c0" style="left:491px;top:766.0px">:dstPortsClient</s>
<s class="c10" style="left:624px;top:766.0px">t</s>
<s class="c0" style="left:631px;top:766.0px">:dstPortsClientIPs</s>
<s class="c10" style="left:785px;top:766.0px">i</s>
<s class="c0" style="left:792px;top:766.0px">:OutTuples</s>
<s class="c10" style="left:890px;top:766.0px">y</s>
<s class="c0" style="left:897px;top:766.0px">:InTuples</s>
<s class="c10" style="left:988px;top:766.0px">z</s>
<s class="c0" style="left:995px;top:766.0px">:ProfileEvidences</s>
<s class="c10" style="left:1142px;top:766.0px">o</s>
<s class="c0" style="left:1149px;top:766.0px">:reload</s>
<s class="c10" style="left:1226px;top:766.0px">ESC</s>
<s class="c0" style="left:1247px;top:766.0px">:quit hotkey</s>
<s class="c10" style="left:1359px;top:766.0px">q</s>
<s class="c0" style="left:1366px;top:766.0px">:quit kalipso</s>
<s class="c10" style="left:1485px;top:766.0px">h</s>
<s class="c0" style="left:1492px;top:766.0px">:help</s>
</body></html>
